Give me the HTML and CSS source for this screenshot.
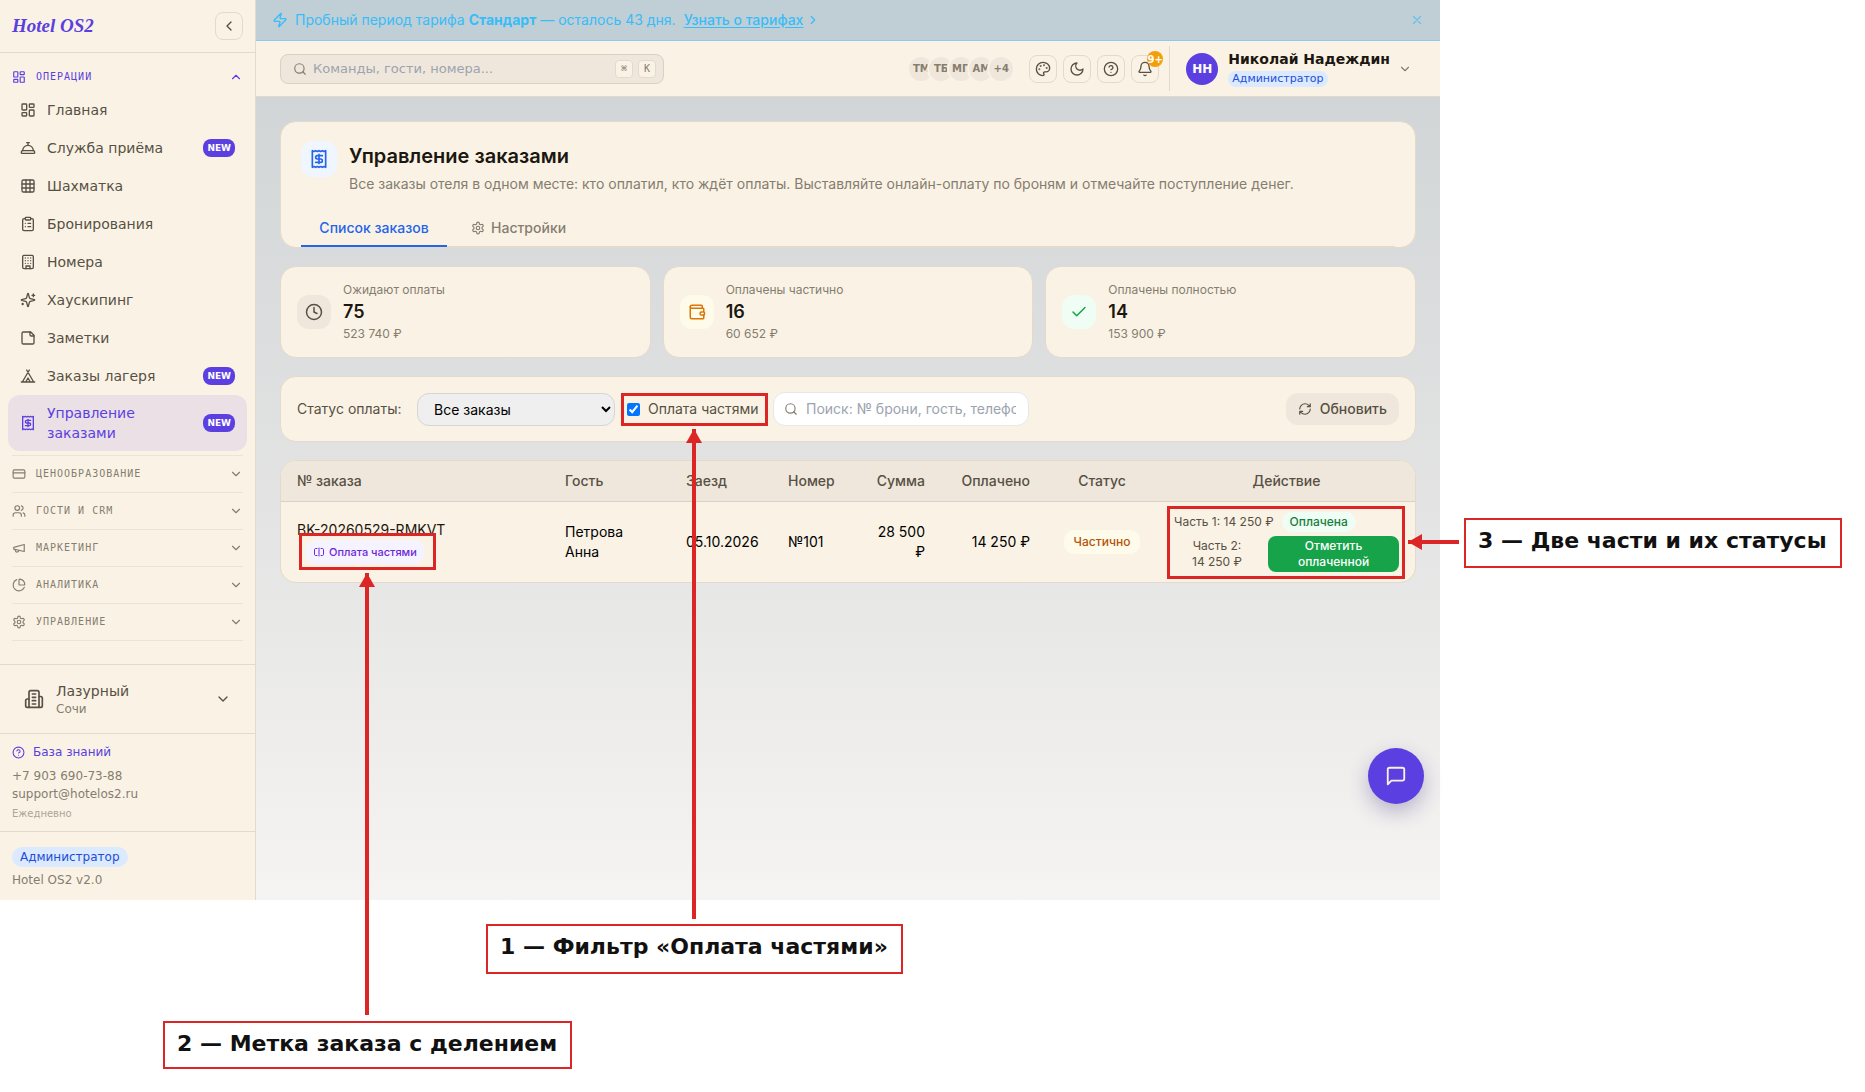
FILE: index.html
```
<!DOCTYPE html>
<html lang="ru">
<head>
  <meta charset="UTF-8" />
  <meta name="viewport" content="width=device-width, initial-scale=1.0" />
  <title>Hotel OS2 — Управление заказами</title>
  <link rel="stylesheet" href="styles.css">
</head>
<body>
  <svg class="sprite" aria-hidden="true">
    <symbol id="i-dash" viewBox="0 0 24 24"><rect width="7" height="9" x="3" y="3" rx="1"/><rect width="7" height="5" x="14" y="3" rx="1"/><rect width="7" height="9" x="14" y="12" rx="1"/><rect width="7" height="5" x="3" y="16" rx="1"/></symbol>
    <symbol id="i-bell-service" viewBox="0 0 24 24"><path d="M3 20a1 1 0 0 1-1-1v-1a2 2 0 0 1 2-2h16a2 2 0 0 1 2 2v1a1 1 0 0 1-1 1Z"/><path d="M20 16a8 8 0 1 0-16 0"/><path d="M12 4v4"/><path d="M10 4h4"/></symbol>
    <symbol id="i-grid" viewBox="0 0 24 24"><rect width="18" height="18" x="3" y="3" rx="2"/><path d="M3 9h18M3 15h18M9 3v18M15 3v18"/></symbol>
    <symbol id="i-clipboard" viewBox="0 0 24 24"><rect width="8" height="4" x="8" y="2" rx="1"/><path d="M16 4h2a2 2 0 0 1 2 2v14a2 2 0 0 1-2 2H6a2 2 0 0 1-2-2V6a2 2 0 0 1 2-2h2"/><path d="M12 11h4M12 16h4M8 11h.01M8 16h.01"/></symbol>
    <symbol id="i-building" viewBox="0 0 24 24"><rect width="16" height="20" x="4" y="2" rx="2"/><path d="M9 22v-4h6v4M8 6h.01M16 6h.01M12 6h.01M12 10h.01M12 14h.01M16 10h.01M16 14h.01M8 10h.01M8 14h.01"/></symbol>
    <symbol id="i-sparkles" viewBox="0 0 24 24"><path d="M9.937 15.5A2 2 0 0 0 8.5 14.063l-6.135-1.582a.5.5 0 0 1 0-.962L8.5 9.936A2 2 0 0 0 9.937 8.5l1.582-6.135a.5.5 0 0 1 .963 0L14.063 8.5A2 2 0 0 0 15.5 9.937l6.135 1.581a.5.5 0 0 1 0 .964L15.5 14.063a2 2 0 0 0-1.437 1.437l-1.582 6.135a.5.5 0 0 1-.963 0z"/><path d="M20 3v4M22 5h-4M4 17v2M5 18H3"/></symbol>
    <symbol id="i-note" viewBox="0 0 24 24"><path d="M16 3H5a2 2 0 0 0-2 2v14a2 2 0 0 0 2 2h14a2 2 0 0 0 2-2V8Z"/><path d="M15 3v4a2 2 0 0 0 2 2h4"/></symbol>
    <symbol id="i-tent" viewBox="0 0 24 24"><path d="M3.5 21 14 3M20.5 21 10 3M15.5 21 12 15l-3.500 6M2 21h20"/></symbol>
    <symbol id="i-receipt" viewBox="0 0 24 24"><path d="M4 2v20l2-1 2 1 2-1 2 1 2-1 2 1 2-1 2 1V2l-2 1-2-1-2 1-2-1-2 1-2-1-2 1Z"/><path d="M16 8h-6a2 2 0 1 0 0 4h4a2 2 0 1 1 0 4H8M12 17.500v-11"/></symbol>
    <symbol id="i-card" viewBox="0 0 24 24"><rect width="20" height="14" x="2" y="5" rx="2"/><path d="M2 10h20"/></symbol>
    <symbol id="i-users" viewBox="0 0 24 24"><path d="M16 21v-2a4 4 0 0 0-4-4H6a4 4 0 0 0-4 4v2"/><circle cx="9" cy="7" r="4"/><path d="M22 21v-2a4 4 0 0 0-3-3.870M16 3.130a4 4 0 0 1 0 7.750"/></symbol>
    <symbol id="i-mega" viewBox="0 0 24 24"><path d="m3 11 18-5v12L3 14v-3z"/><path d="M11.600 16.800a3 3 0 1 1-5.800-1.600"/></symbol>
    <symbol id="i-pie" viewBox="0 0 24 24"><path d="M21 12c.552 0 1.005-.449.950-.998a10 10 0 0 0-8.953-8.951c-.550-.055-.998.398-.998.950v8a1 1 0 0 0 1 1z"/><path d="M21.210 15.890A10 10 0 1 1 8 2.830"/></symbol>
    <symbol id="i-gear" viewBox="0 0 24 24"><path d="M12.220 2h-.440a2 2 0 0 0-2 2v.180a2 2 0 0 1-1 1.730l-.430.250a2 2 0 0 1-2 0l-.150-.080a2 2 0 0 0-2.730.730l-.220.380a2 2 0 0 0 .730 2.730l.150.100a2 2 0 0 1 1 1.720v.510a2 2 0 0 1-1 1.740l-.150.090a2 2 0 0 0-.730 2.730l.220.380a2 2 0 0 0 2.730.730l.150-.080a2 2 0 0 1 2 0l.430.250a2 2 0 0 1 1 1.730V20a2 2 0 0 0 2 2h.440a2 2 0 0 0 2-2v-.180a2 2 0 0 1 1-1.730l.430-.250a2 2 0 0 1 2 0l.150.080a2 2 0 0 0 2.730-.730l.220-.390a2 2 0 0 0-.730-2.730l-.150-.080a2 2 0 0 1-1-1.740v-.500a2 2 0 0 1 1-1.740l.150-.090a2 2 0 0 0 .730-2.730l-.220-.380a2 2 0 0 0-2.730-.730l-.150.080a2 2 0 0 1-2 0l-.430-.250a2 2 0 0 1-1-1.730V4a2 2 0 0 0-2-2z"/><circle cx="12" cy="12" r="3"/></symbol>
    <symbol id="i-down" viewBox="0 0 24 24"><path d="m6 9 6 6 6-6"/></symbol>
    <symbol id="i-up" viewBox="0 0 24 24"><path d="m18 15-6-6-6 6"/></symbol>
    <symbol id="i-left" viewBox="0 0 24 24"><path d="m15 18-6-6 6-6"/></symbol>
    <symbol id="i-right" viewBox="0 0 24 24"><path d="m9 18 6-6-6-6"/></symbol>
    <symbol id="i-hotel" viewBox="0 0 24 24"><path d="M6 22V4a2 2 0 0 1 2-2h8a2 2 0 0 1 2 2v18Z"/><path d="M6 12H4a2 2 0 0 0-2 2v6a2 2 0 0 0 2 2h2M18 9h2a2 2 0 0 1 2 2v9a2 2 0 0 1-2 2h-2M10 6h4M10 10h4M10 14h4M10 18h4"/></symbol>
    <symbol id="i-help" viewBox="0 0 24 24"><circle cx="12" cy="12" r="10"/><path d="M9.090 9a3 3 0 0 1 5.830 1c0 2-3 3-3 3M12 17h.01"/></symbol>
    <symbol id="i-zap" viewBox="0 0 24 24"><path d="M4 14a1 1 0 0 1-.780-1.630l9.900-10.200a.5.5 0 0 1 .860.460l-1.920 6.020A1 1 0 0 0 13 10h7a1 1 0 0 1 .780 1.630l-9.900 10.200a.5.5 0 0 1-.860-.460l1.920-6.020A1 1 0 0 0 11 14z"/></symbol>
    <symbol id="i-x" viewBox="0 0 24 24"><path d="M18 6 6 18M6 6l12 12"/></symbol>
    <symbol id="i-search" viewBox="0 0 24 24"><circle cx="11" cy="11" r="8"/><path d="m21 21-4.300-4.300"/></symbol>
    <symbol id="i-palette" viewBox="0 0 24 24"><circle cx="13.500" cy="6.500" r=".5"/><circle cx="17.500" cy="10.500" r=".5"/><circle cx="8.500" cy="7.500" r=".5"/><circle cx="6.500" cy="12.500" r=".5"/><path d="M12 2C6.500 2 2 6.500 2 12s4.500 10 10 10c.926 0 1.648-.746 1.648-1.688 0-.437-.180-.835-.437-1.125-.290-.289-.438-.652-.438-1.125a1.640 1.640 0 0 1 1.668-1.668h1.996c3.051 0 5.555-2.503 5.555-5.554C21.965 6.012 17.461 2 12 2z"/></symbol>
    <symbol id="i-moon" viewBox="0 0 24 24"><path d="M12 3a6 6 0 0 0 9 9 9 9 0 1 1-9-9Z"/></symbol>
    <symbol id="i-bell" viewBox="0 0 24 24"><path d="M10.268 21a2 2 0 0 0 3.464 0M3.262 15.326A1 1 0 0 0 4 17h16a1 1 0 0 0 .740-1.673C19.410 13.956 18 12.499 18 8A6 6 0 0 0 6 8c0 4.499-1.411 5.956-2.738 7.326"/></symbol>
    <symbol id="i-clock" viewBox="0 0 24 24"><circle cx="12" cy="12" r="10"/><path d="M12 6v6l4 2"/></symbol>
    <symbol id="i-wallet" viewBox="0 0 24 24"><path d="M19 7V4a1 1 0 0 0-1-1H5a2 2 0 0 0 0 4h15a1 1 0 0 1 1 1v4h-3a2 2 0 0 0 0 4h3a1 1 0 0 0 1-1v-2a1 1 0 0 0-1-1"/><path d="M3 5v14a2 2 0 0 0 2 2h15a1 1 0 0 0 1-1v-4"/></symbol>
    <symbol id="i-check" viewBox="0 0 24 24"><path d="M20 6 9 17l-5-5"/></symbol>
    <symbol id="i-refresh" viewBox="0 0 24 24"><path d="M3 12a9 9 0 0 1 9-9 9.750 9.750 0 0 1 6.740 2.740L21 8M21 3v5h-5M21 12a9 9 0 0 1-9 9 9.750 9.750 0 0 1-6.740-2.740L3 16M8 16H3v5"/></symbol>
    <symbol id="i-split" viewBox="0 0 24 24"><path d="M8 19H5c-1 0-2-1-2-2V7c0-1 1-2 2-2h3M16 5h3c1 0 2 1 2 2v10c0 1-1 2-2 2h-3M12 4v16"/></symbol>
    <symbol id="i-chat" viewBox="0 0 24 24"><path d="M21 15a2 2 0 0 1-2 2H7l-4 4V5a2 2 0 0 1 2-2h14a2 2 0 0 1 2 2z"/></symbol>
  </svg>

  <div class="app">
    <aside class="sidebar">
      <div class="brand">
        <span class="logo">Hotel OS2</span>
        <button type="button" class="icon-btn" aria-label="Свернуть меню"><svg class="icon s16"><use href="#i-left"/></svg></button>
      </div>

      <nav class="nav">
        <button type="button" class="group group-open"><svg class="icon s14"><use href="#i-dash"/></svg><span>ОПЕРАЦИИ</span><svg class="icon s14"><use href="#i-up"/></svg></button>
        <a href="#" class="nav-item"><svg class="icon s16"><use href="#i-dash"/></svg><span>Главная</span></a>
        <a href="#" class="nav-item"><svg class="icon s16"><use href="#i-bell-service"/></svg><span>Служба приёма</span><b class="new">NEW</b></a>
        <a href="#" class="nav-item"><svg class="icon s16"><use href="#i-grid"/></svg><span>Шахматка</span></a>
        <a href="#" class="nav-item"><svg class="icon s16"><use href="#i-clipboard"/></svg><span>Бронирования</span></a>
        <a href="#" class="nav-item"><svg class="icon s16"><use href="#i-building"/></svg><span>Номера</span></a>
        <a href="#" class="nav-item"><svg class="icon s16"><use href="#i-sparkles"/></svg><span>Хаускипинг</span></a>
        <a href="#" class="nav-item"><svg class="icon s16"><use href="#i-note"/></svg><span>Заметки</span></a>
        <a href="#" class="nav-item"><svg class="icon s16"><use href="#i-tent"/></svg><span>Заказы лагеря</span><b class="new">NEW</b></a>
        <a href="#" class="nav-item active"><svg class="icon s16"><use href="#i-receipt"/></svg><span>Управление заказами</span><b class="new">NEW</b></a>
        <div class="groups">
          <button type="button" class="group"><svg class="icon s14"><use href="#i-card"/></svg><span>ЦЕНООБРАЗОВАНИЕ</span><svg class="icon s14"><use href="#i-down"/></svg></button>
          <button type="button" class="group"><svg class="icon s14"><use href="#i-users"/></svg><span>ГОСТИ И CRM</span><svg class="icon s14"><use href="#i-down"/></svg></button>
          <button type="button" class="group"><svg class="icon s14"><use href="#i-mega"/></svg><span>МАРКЕТИНГ</span><svg class="icon s14"><use href="#i-down"/></svg></button>
          <button type="button" class="group"><svg class="icon s14"><use href="#i-pie"/></svg><span>АНАЛИТИКА</span><svg class="icon s14"><use href="#i-down"/></svg></button>
          <button type="button" class="group"><svg class="icon s14"><use href="#i-gear"/></svg><span>УПРАВЛЕНИЕ</span><svg class="icon s14"><use href="#i-down"/></svg></button>
        </div>
      </nav>

      <button type="button" class="property">
        <svg class="icon s20"><use href="#i-hotel"/></svg>
        <span class="property-name">Лазурный<small>Сочи</small></span>
        <svg class="icon s16"><use href="#i-down"/></svg>
      </button>
      <div class="support">
        <a href="#" class="kb"><svg class="icon s13"><use href="#i-help"/></svg>База знаний</a>
        <a href="tel:+79036907388">+7 903 690-73-88</a>
        <a href="mailto:support@hotelos2.ru">support@hotelos2.ru</a>
        <small>Ежедневно</small>
      </div>
      <div class="version">
        <span class="role">Администратор</span>
        <span>Hotel OS2 v2.0</span>
      </div>
    </aside>

    <div class="main">
      <div class="banner">
        <svg class="icon s16"><use href="#i-zap"/></svg>
        <p>Пробный период тарифа <b>Стандарт</b> — осталось 43 дня.</p>
        <a href="#">Узнать о тарифах</a>
        <svg class="icon s14"><use href="#i-right"/></svg>
        <button type="button" aria-label="Закрыть"><svg class="icon s14"><use href="#i-x"/></svg></button>
      </div>

      <header class="topbar">
        <label class="command">
          <svg class="icon s14"><use href="#i-search"/></svg>
          <input type="text" placeholder="Команды, гости, номера..." aria-label="Поиск команд">
          <kbd>⌘</kbd><kbd>K</kbd>
        </label>
        <div class="people">
          <span>ТМ</span><span>ТБ</span><span>МП</span><span>АМ</span><span>+4</span>
        </div>
        <div class="tools">
          <button type="button" class="icon-btn" aria-label="Тема"><svg class="icon s16"><use href="#i-palette"/></svg></button>
          <button type="button" class="icon-btn" aria-label="Тёмный режим"><svg class="icon s16"><use href="#i-moon"/></svg></button>
          <button type="button" class="icon-btn" aria-label="Помощь"><svg class="icon s16"><use href="#i-help"/></svg></button>
          <button type="button" class="icon-btn" aria-label="Уведомления"><svg class="icon s16"><use href="#i-bell"/></svg><span class="count">9+</span></button>
        </div>
        <button type="button" class="user">
          <span class="avatar">НН</span>
          <span class="user-text"><b>Николай Надеждин</b><span class="role role-small">Администратор</span></span>
          <svg class="icon s14"><use href="#i-down"/></svg>
        </button>
      </header>

      <main class="content">
        <section class="card head">
          <div class="head-row">
            <span class="tile blue"><svg class="icon s20"><use href="#i-receipt"/></svg></span>
            <div>
              <h1>Управление заказами</h1>
              <p>Все заказы отеля в одном месте: кто оплатил, кто ждёт оплаты. Выставляйте онлайн-оплату по броням и отмечайте поступление денег.</p>
            </div>
          </div>
          <div class="tabs">
            <button type="button" class="tab current">Список заказов</button>
            <button type="button" class="tab"><svg class="icon s14"><use href="#i-gear"/></svg>Настройки</button>
          </div>
        </section>

        <section class="stats">
          <div class="card stat">
            <span class="tile gray"><svg class="icon s18"><use href="#i-clock"/></svg></span>
            <div><span>Ожидают оплаты</span><b>75</b><span>523 740 ₽</span></div>
          </div>
          <div class="card stat">
            <span class="tile amber"><svg class="icon s18"><use href="#i-wallet"/></svg></span>
            <div><span>Оплачены частично</span><b>16</b><span>60 652 ₽</span></div>
          </div>
          <div class="card stat">
            <span class="tile green"><svg class="icon s18"><use href="#i-check"/></svg></span>
            <div><span>Оплачены полностью</span><b>14</b><span>153 900 ₽</span></div>
          </div>
        </section>

        <form class="card filters">
          <label class="status-label" for="status">Статус оплаты:</label>
          <select id="status"><option>Все заказы</option></select>
          <label class="check"><input type="checkbox" checked>Оплата частями</label>
          <label class="find">
            <svg class="icon s14"><use href="#i-search"/></svg>
            <input type="text" placeholder="Поиск: № брони, гость, телефон" aria-label="Поиск заказа">
          </label>
          <button type="button" class="refresh"><svg class="icon s14"><use href="#i-refresh"/></svg>Обновить</button>
        </form>

        <section class="card orders">
          <table>
            <colgroup><col class="c-id"><col class="c-guest"><col class="c-date"><col class="c-room"><col class="c-sum"><col class="c-paid"><col class="c-status"><col class="c-action"></colgroup>
            <thead>
              <tr><th>№ заказа</th><th>Гость</th><th>Заезд</th><th>Номер</th><th class="num">Сумма</th><th class="num">Оплачено</th><th class="mid">Статус</th><th class="mid">Действие</th></tr>
            </thead>
            <tbody>
              <tr>
                <td class="order-id">BK-20260529-RMKVT <span class="split"><svg class="icon s12"><use href="#i-split"/></svg>Оплата частями</span></td>
                <td>Петрова Анна</td>
                <td>05.10.2026</td>
                <td>№101</td>
                <td class="num">28 500 ₽</td>
                <td class="num">14 250 ₽</td>
                <td class="mid"><span class="pill amber">Частично</span></td>
                <td class="parts">
                  <div class="part"><span>Часть 1: 14 250 ₽</span><span class="pill paid">Оплачена</span></div>
                  <div class="part"><span class="part-name">Часть 2:<br>14 250 ₽</span><button type="button">Отметить оплаченной</button></div>
                </td>
              </tr>
            </tbody>
          </table>
        </section>
      </main>

      <button type="button" class="chat" aria-label="Чат"><svg class="icon s22"><use href="#i-chat"/></svg></button>
    </div>
  </div>

  <!-- callouts over the app -->
  <div class="frame frame-filter"></div>
  <div class="frame frame-tag"></div>
  <div class="frame frame-parts"></div>
  <div class="arrow arrow-filter"></div>
  <div class="arrow arrow-tag"></div>
  <div class="arrow arrow-side arrow-parts"></div>
  <div class="note note-filter">1 — Фильтр «Оплата частями»</div>
  <div class="note note-tag">2 — Метка заказа с делением</div>
  <div class="note note-parts">3 — Две части и их статусы</div>
</body>
</html>
```
FILE: styles.css
```
:root {
  --cream: #faf3e5;
  --sand: #efe7db;
  --line: #e2dacd;
  --text: #1c1710;
  --soft: #575044;
  --muted: #857d70;
  --primary: #5b3fe0;
  --red: #dc2626;
}
* { box-sizing: border-box; }
body { margin: 0; padding: 0 425px 192px 0; background: #fff; color: var(--text); font: 14px/20px "DejaVu Sans", sans-serif; position: relative; }
p, h1 { margin: 0; }
a { color: inherit; text-decoration: none; }
button, input, select { font: inherit; color: inherit; }
button { padding: 0; border: 0; background: none; cursor: pointer; }
.sprite { display: none; }
.icon { flex: none; fill: none; stroke: currentColor; stroke-width: 2; stroke-linecap: round; stroke-linejoin: round; }
.s12 { width: 12px; height: 12px; }
.s13 { width: 13px; height: 13px; }
.s14 { width: 14px; height: 14px; }
.s16 { width: 16px; height: 16px; }
.s18 { width: 18px; height: 18px; }
.s20 { width: 20px; height: 20px; }
.s22 { width: 22px; height: 22px; }

.app { display: grid; grid-template-columns: 256px minmax(0, 1fr); min-height: calc(100vh - 192px); background: linear-gradient(#cdd2d4, #e3e3e3 55%, #f5f4f2); }

/* sidebar */
.sidebar { display: flex; flex-direction: column; background: var(--cream); border-right: 1px solid var(--line); color: var(--soft); }
.brand { display: flex; align-items: center; justify-content: space-between; height: 53px; padding: 0 12px; border-bottom: 1px solid var(--line); }
.logo { font: italic bold 19px/24px "Liberation Serif", serif; color: var(--primary); }
.icon-btn { position: relative; display: flex; align-items: center; justify-content: center; width: 28px; height: 28px; border: 1px solid var(--line); border-radius: 8px; color: var(--soft); }
.nav { flex: 1; padding: 9px 8px 0; }
.group { display: flex; align-items: center; gap: 10px; width: 100%; height: 36px; font: 10px/16px "DejaVu Sans Mono", monospace; letter-spacing: 1px; text-align: left; color: var(--muted); }
.group span { flex: 1; }
.group-open { height: 29px; padding: 0 4px; color: var(--primary); }
.nav-item { display: flex; align-items: center; gap: 11px; min-height: 38px; padding: 8px 12px; border-radius: 12px; }
.nav-item span { flex: 1; }
.nav-item.active { background: #eae0e6; color: var(--primary); }
.new { padding: 0 4px; border-radius: 8px; background: var(--primary); color: #fff; font-size: 9px; line-height: 18px; }
.groups { margin: 4px 4px 0; border-top: 1px solid #ebe3d7; }
.groups .group { height: 37px; border-bottom: 1px solid #ebe3d7; }
.property { display: flex; align-items: center; gap: 12px; height: 69px; padding: 0 24px; border-top: 1px solid var(--line); text-align: left; }
.property-name { flex: 1; padding-top: 2px; line-height: 18px; }
.property-name small { display: block; font-size: 12px; color: var(--muted); }
.support { display: flex; flex-direction: column; height: 98px; padding: 8px 12px; border-top: 1px solid var(--line); font-size: 12px; line-height: 18px; color: var(--muted); }
.support small { font-size: 10px; line-height: 22px; color: #ada595; }
.kb { display: flex; align-items: center; gap: 8px; margin-bottom: 5px; line-height: 20px; color: var(--primary); }
.version { display: flex; flex-direction: column; align-items: flex-start; gap: 4px; height: 69px; padding-top: 15px; padding-left: 12px; border-top: 1px solid var(--line); font-size: 12px; line-height: 18px; color: var(--muted); }
.role { padding: 0 8px; border-radius: 10px; background: #dbeafe; color: #1d4ed8; line-height: 20px; }
.role-small { padding: 0 4px; font-size: 11px; line-height: 16px; }

/* top */
.main { position: relative; display: flex; flex-direction: column; font-family: Inter, sans-serif; }
.banner { display: flex; align-items: center; height: 41px; padding: 0 16px; border-bottom: 1px solid #8ccbe6; background: #c0ced5; color: #38bdf8; }
.banner p { margin: 0 8px 0 7px; }
.banner a { font-weight: 500; text-decoration: underline; text-underline-offset: 2px; }
.banner a + .icon { margin-left: 3px; }
.banner button { display: flex; margin-left: auto; opacity: .7; }
.topbar { display: flex; align-items: center; height: 56px; padding: 0 28px 0 24px; border-bottom: 1px solid var(--line); background: var(--cream); font-family: "DejaVu Sans", sans-serif; }
.command { display: flex; align-items: center; gap: 5px; width: 384px; height: 30px; padding: 0 7px 0 12px; border: 1px solid #d9d1c4; border-radius: 8px; background: var(--sand); color: var(--muted); }
.command input { flex: 1; min-width: 0; padding: 0 1px; border: 0; outline: 0; background: none; font-size: 13px; }
input::placeholder { color: #9ca3af; opacity: 1; }
kbd { width: 18px; height: 18px; border: 1px solid var(--line); border-radius: 4px; background: var(--cream); font: 10px/16px "DejaVu Sans Mono", monospace; text-align: center; }
.people { display: flex; margin: 0 14px 0 auto; }
.people span { display: flex; align-items: center; justify-content: center; width: 28px; height: 28px; border: 2px solid var(--cream); border-radius: 50%; background: var(--sand); color: var(--muted); font-size: 10px; font-weight: bold; }
.people span + span { margin-left: -8px; }
.tools { display: flex; gap: 6px; padding-right: 10px; }
.count { position: absolute; top: -5px; right: -5px; width: 16px; height: 16px; border-radius: 50%; background: #f59e0b; color: #fff; font-size: 10px; font-weight: bold; line-height: 17px; display: flex; justify-content: center; }
.user { display: flex; align-items: center; height: 45px; padding-left: 16px; border-left: 1px solid var(--line); text-align: left; color: var(--muted); }
.avatar { width: 32px; height: 32px; margin-right: 10px; border-radius: 50%; background: var(--primary); color: #fff; font-size: 12px; font-weight: bold; line-height: 32px; text-align: center; }
.user-text { display: flex; flex-direction: column; align-items: flex-start; gap: 3px; margin-right: 8px; line-height: 18px; color: var(--text); }

/* content */
.content { display: flex; flex-direction: column; gap: 18px; padding: 24px; }
.card { border: 1px solid var(--line); border-radius: 16px; background: var(--cream); }
.head { padding: 19px 20px 0; }
.head-row { display: flex; gap: 12px; }
h1 { font-size: 20px; font-weight: 600; line-height: 30px; }
.head p { line-height: 26px; color: var(--muted); }
.tile { display: flex; flex: none; align-items: center; justify-content: center; width: 34px; height: 34px; border-radius: 12px; }
.tile.blue { width: 36px; height: 36px; background: #eff6ff; color: #2563eb; }
.tile.gray { background: var(--sand); color: var(--soft); }
.tile.amber { background: #fffbeb; color: #d97706; }
.tile.green { background: #f0fdf4; color: #16a34a; }
.tabs { display: flex; gap: 8px; margin-top: 12px; border-bottom: 1px solid var(--line); }
.tab { display: flex; align-items: center; justify-content: center; gap: 6px; height: 38px; margin-bottom: -1px; padding: 2px 16px 0; border-bottom: 2px solid transparent; font-weight: 500; color: var(--muted); }
.tab.current { min-width: 146px; border-color: #2563eb; color: #2563eb; }
.stats { display: grid; grid-template-columns: repeat(3, 1fr); gap: 12px; }
.stat { display: flex; align-items: center; gap: 12px; padding: 15px 16px; font-size: 12px; line-height: 16px; color: var(--muted); }
.stat div { display: flex; flex-direction: column; }
.stat b { font-size: 18px; font-weight: 600; line-height: 28px; color: var(--text); }
.filters { display: flex; align-items: center; height: 66px; padding: 0 16px; color: var(--soft); }
.status-label { min-width: 108px; }
.filters select { width: 198px; height: 33px; margin: 0 12px; padding: 0 12px; border: 1px solid #d5d5d8; border-radius: 12px; background: #efefef; color: #000; }
.check { display: flex; align-items: center; gap: 8px; min-width: 134px; }
.check input { width: 13px; height: 13px; margin: 0; }
.find { display: flex; align-items: center; gap: 8px; width: 256px; height: 34px; margin-left: 12px; padding: 0 12px 0 10px; border: 1px solid #e5e7eb; border-radius: 12px; background: #fff; color: var(--muted); }
.find input { width: 100%; min-width: 0; padding: 0; border: 0; outline: 0; background: none; }
.refresh { display: flex; align-items: center; gap: 8px; height: 32px; margin-left: auto; padding: 0 12px; border-radius: 12px; background: var(--sand); font-weight: 500; }

/* orders table */
.orders { overflow: hidden; }
table { width: 100%; border-collapse: collapse; table-layout: fixed; color: #000; }
.c-id { width: 268px; }
.c-guest { width: 121px; }
.c-date { width: 102px; }
.c-room { width: 86px; }
.c-sum { width: 83px; }
.c-paid { width: 105px; }
.c-status { width: 112px; }
th { height: 40px; padding: 0 16px; border-bottom: 1px solid #d9d1c4; background: var(--sand); color: var(--soft); font-weight: 500; text-align: left; }
td { height: 81px; padding: 0 16px; }
.num { text-align: right; }
.mid { text-align: center; }
.order-id { color: var(--text); }
.split { display: flex; align-items: center; gap: 4px; width: max-content; height: 24px; margin-left: 8px; padding: 0 8px; border-radius: 12px; background: #f5f3ff; color: #6d28d9; font-size: 11px; font-weight: 500; }
.pill { display: inline-block; padding: 0 10px; border-radius: 10px; font-size: 12px; font-weight: 500; line-height: 24px; }
.pill.amber { background: #fffbeb; color: #b45309; }
.pill.paid { padding: 0 8px; background: #f0fdf4; color: #15803d; line-height: 20px; }
.part { display: flex; align-items: center; gap: 8px; font-size: 12px; line-height: 16px; color: var(--soft); }
.part + .part { margin-top: 4px; }
.part-name { flex: 1; text-align: center; }
.part button { width: 131px; padding: 2px 20px; border-radius: 8px; background: #16a34a; color: #fff; font-weight: 500; }
.chat { position: absolute; right: 16px; bottom: 96px; display: flex; align-items: center; justify-content: center; width: 56px; height: 56px; border-radius: 50%; background: var(--primary); color: var(--cream); box-shadow: 0 8px 20px rgba(60, 40, 120, .3); }

/* callouts */
.frame, .arrow, .note { position: absolute; }
.frame { border: 3px solid var(--red); }
.frame-filter { left: 621px; top: 393px; width: 147px; height: 33px; }
.frame-tag { left: 299px; top: 533px; width: 137px; height: 37px; }
.frame-parts { left: 1167px; top: 506px; width: 238px; height: 73px; }
.arrow { width: 4px; background: var(--red); }
.arrow::before { content: ""; position: absolute; left: -6px; top: 0; border: 8px solid transparent; border-top: 0; border-bottom: 14px solid var(--red); }
.arrow-filter { left: 692px; top: 429px; height: 490px; }
.arrow-tag { left: 365px; top: 573px; height: 442px; }
.arrow-side { width: 51px; height: 4px; }
.arrow-side::before { left: 0; top: -6px; border: 8px solid transparent; border-left: 0; border-right: 14px solid var(--red); }
.arrow-parts { left: 1408px; top: 540px; }
.note { padding: 9px 13px 13px 12px; border: 2px solid var(--red); background: #fff; color: #111; font-size: 22px; font-weight: bold; line-height: 24px; white-space: nowrap; }
.note-filter { left: 486px; top: 924px; }
.note-tag { left: 163px; top: 1021px; padding-bottom: 11px; }
.note-parts { left: 1464px; top: 518px; }
```
